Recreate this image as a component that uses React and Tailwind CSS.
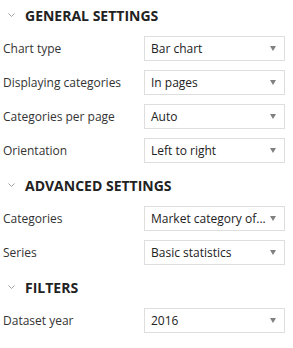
import React from "react";

const sections = [
  {
    title: "GENERAL SETTINGS",
    rows: [
      ["Chart type", "Bar chart"],
      ["Displaying categories", "In pages"],
      ["Categories per page", "Auto"],
      ["Orientation", "Left to right"],
    ],
  },
  {
    title: "ADVANCED SETTINGS",
    rows: [
      ["Categories", "Market category of..."],
      ["Series", "Basic statistics"],
    ],
  },
  {
    title: "FILTERS",
    rows: [["Dataset year", "2016"]],
  },
];

const Chevron = () => (
  <svg width="7" height="4" viewBox="0 0 7 4" className="ml-[8px] mr-[10px]">
    <path d="M0.5 0.5 L3.5 3.5 L6.5 0.5" fill="none" stroke="#a0a0a0" strokeWidth="1" />
  </svg>
);

const Arrow = () => (
  <svg width="6" height="5" viewBox="0 0 6 5">
    <path d="M0 0 H6 L3 5 Z" fill="#808080" />
  </svg>
);

const Row = ({ label, value }) => (
  <div className="flex items-center h-[25px] mb-[9px]">
    <div className="flex-1 text-[12px] text-[#333] pl-[3px]">{label}</div>
    <div className="w-[141px] h-[25px] border border-[#dedede] bg-white flex items-center pl-[6px] pr-[8px] mr-[8px]">
      <span className="flex-1 text-[12px] text-[#222] whitespace-nowrap">{value}</span>
      <Arrow />
    </div>
  </div>
);

export default function App() {
  return (
    <div className="w-[293px] h-[348px] bg-white" style={{ fontFamily: '"Open Sans", sans-serif' }}>
      {sections.map((s, i) => (
        <div key={s.title} className={i === 0 ? "pt-[4px]" : "pt-[2px]"}>
          <div className="flex items-center h-[22px] mb-[10px]">
            <Chevron />
            <span className="text-[14px] font-bold text-[#222]">{s.title}</span>
          </div>
          {s.rows.map(([l, v]) => (
            <Row key={l} label={l} value={v} />
          ))}
        </div>
      ))}
    </div>
  );
}
